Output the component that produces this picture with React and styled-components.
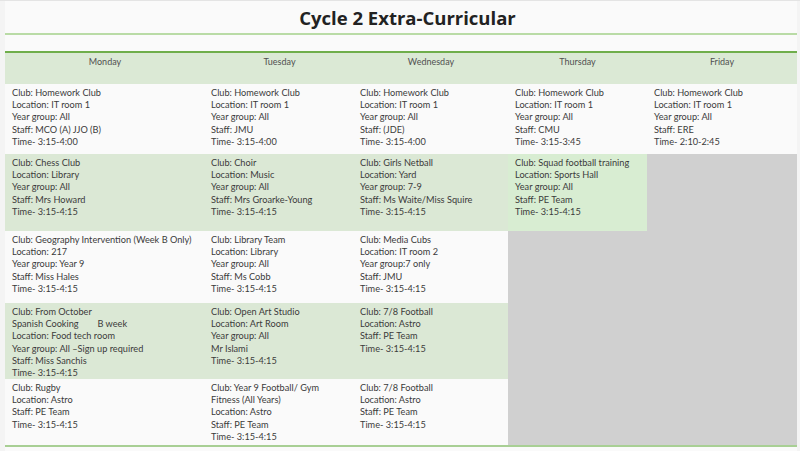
import React from 'react';
import styled, { createGlobalStyle } from 'styled-components';

const GlobalStyle = createGlobalStyle`
  html, body {
    margin: 0;
    padding: 0;
    background: #f4f4f4;
  }
  #root {
    width: 800px;
    height: 451px;
    overflow: hidden;
  }
`;

const Page = styled.div`
  height: 450px;
  border-top: 1px solid #e4e4e4;
  padding: 0 3px 0 5px;
  font-family: Lato, "Liberation Sans", sans-serif;
`;

const Sheet = styled.div`
  background: #fafafa;
  height: 100%;
`;

const Title = styled.h1`
  margin: 0;
  height: 32px;
  padding-left: 13px;
  display: flex;
  align-items: center;
  justify-content: center;
  font-family: "Open Sans", "Noto Sans", sans-serif;
  font-size: 18.5px;
  font-weight: 700;
  color: #222;
  border-bottom: 2px solid #b9dba6;
`;

const Gap = styled.div`
  height: 16px;
`;

const Table = styled.div`
  display: grid;
  grid-template-columns: 200px 149px 154px 139px 150px;
  grid-template-rows: 31px 70px 77px 72px 76px 66px;
  border-top: 2px solid #6fae4b;
  border-bottom: 2px solid #a8cf94;
`;

const DayCell = styled.div`
  background: #dbe9d5;
  color: #505050;
  font-size: 9px;
  text-align: center;
  padding-top: 3px;
`;

const fills = {
  white: '#fafafa',
  green: '#dbe8d5',
  bright: '#d8edd2',
  gray: '#d0d0d0',
};

const Cell = styled.div`
  background: ${p => fills[p.$fill]};
  padding: 3px 6px 0 ${p => p.$pad || 6}px;
  color: #3b3b3b;
  font-size: 9.2px;
  line-height: 12.2px;
  white-space: pre-wrap;
`;

const days = ['Monday', 'Tuesday', 'Wednesday', 'Thursday', 'Friday'];

const rows = [
  {
    fill: 'white',
    cells: [
      ['Club: Homework Club', 'Location: IT room 1', 'Year group: All', 'Staff: MCO (A) JJO (B)', 'Time- 3:15-4:00'],
      ['Club: Homework Club', 'Location: IT room 1', 'Year group: All', 'Staff: JMU', 'Time- 3:15-4:00'],
      ['Club: Homework Club', 'Location: IT room 1', 'Year group: All', 'Staff: (JDE)', 'Time- 3:15-4:00'],
      ['Club: Homework Club', 'Location: IT room 1', 'Year group: All', 'Staff: CMU', 'Time- 3:15-3:45'],
      ['Club: Homework Club', 'Location: IT room 1', 'Year group: All', 'Staff: ERE', 'Time- 2:10-2:45'],
    ],
  },
  {
    fill: 'green',
    cells: [
      ['Club: Chess Club', 'Location: Library', 'Year group: All', 'Staff: Mrs Howard', 'Time- 3:15-4:15'],
      ['Club: Choir', 'Location: Music', 'Year group: All', 'Staff: Mrs Groarke-Young', 'Time- 3:15-4:15'],
      ['Club: Girls Netball', 'Location: Yard', 'Year group: 7-9', 'Staff: Ms Waite/Miss Squire', 'Time- 3:15-4:15'],
      { fill: 'bright', lines: ['Club: Squad football training', 'Location: Sports Hall', 'Year group: All', 'Staff: PE Team', 'Time- 3:15-4:15'] },
      null,
    ],
  },
  {
    fill: 'white',
    cells: [
      ['Club: Geography Intervention (Week B Only)', 'Location: 217', 'Year group: Year 9', 'Staff: Miss Hales', 'Time- 3:15-4:15'],
      ['Club: Library Team', 'Location: Library', 'Year group: All', 'Staff: Ms Cobb', 'Time- 3:15-4:15'],
      ['Club: Media Cubs', 'Location: IT room 2', 'Year group:7 only', 'Staff: JMU', 'Time- 3:15-4:15'],
      null,
      null,
    ],
  },
  {
    fill: 'green',
    cells: [
      ['Club: From October', 'Spanish Cooking        B week', 'Location: Food tech room', 'Year group: All \u2013Sign up required', 'Staff: Miss Sanchis', 'Time- 3:15-4:15'],
      ['Club: Open Art Studio', 'Location: Art Room', 'Year group: All', 'Mr Islami', 'Time- 3:15-4:15'],
      ['Club: 7/8 Football', 'Location: Astro', 'Staff: PE Team', 'Time- 3:15-4:15'],
      null,
      null,
    ],
  },
  {
    fill: 'white',
    cells: [
      ['Club: Rugby', 'Location: Astro', 'Staff: PE Team', 'Time- 3:15-4:15'],
      ['Club: Year 9 Football/ Gym', 'Fitness (All Years)', 'Location: Astro', 'Staff: PE Team', 'Time- 3:15-4:15'],
      ['Club: 7/8 Football', 'Location: Astro', 'Staff: PE Team', 'Time- 3:15-4:15'],
      null,
      null,
    ],
  },
];

const pads = [7, 6, 6, 7, 7];

export default function App() {
  return (
    <>
      <GlobalStyle />
      <Page>
        <Sheet>
          <Title>Cycle 2 Extra-Curricular</Title>
          <Gap />
          <Table>
            {days.map(d => (
              <DayCell key={d}>{d}</DayCell>
            ))}
            {rows.map((row, r) =>
              row.cells.map((cell, c) => {
                if (cell === null) {
                  return <Cell key={`${r}-${c}`} $fill="gray" />;
                }
                const lines = Array.isArray(cell) ? cell : cell.lines;
                const fill = Array.isArray(cell) ? row.fill : cell.fill;
                return (
                  <Cell key={`${r}-${c}`} $fill={fill} $pad={pads[c]}>
                    {lines.join('\n')}
                  </Cell>
                );
              })
            )}
          </Table>
        </Sheet>
      </Page>
    </>
  );
}
